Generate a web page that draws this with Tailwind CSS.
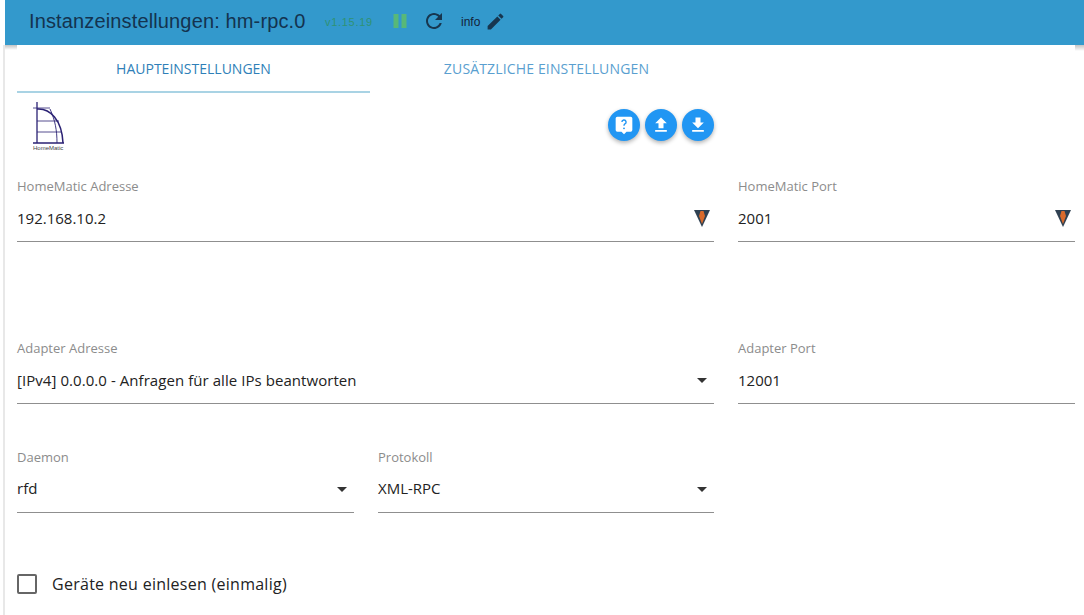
<!DOCTYPE html>
<html lang="de">
<head>
<meta charset="utf-8">
<script src="https://cdn.jsdelivr.net/npm/@tailwindcss/browser@4"></script>
<title>Instanzeinstellungen</title>
</head>
<body class="bg-white overflow-hidden font-['Open_Sans',sans-serif]">
<div class="w-[1084px] h-[615px] relative overflow-hidden pl-[5px]">
  <div class="absolute left-[3px] top-[45px] bottom-0 w-[2px] bg-[#e8e8e8]"></div>
  <div class="absolute left-[5px] top-[45px] w-[12px] h-[5px] bg-gradient-to-b from-[#c4c4c4] to-white"></div>
  <div class="absolute right-0 top-[45px] w-[9px] h-[6px] bg-gradient-to-b from-[#c4c4c4] to-white"></div>

  <header class="h-[45px] bg-[#3399cc] flex items-center pl-[24px] pb-[3px] font-['Liberation_Sans',sans-serif]">
    <h1 class="text-[20px] text-[#14334f] leading-none w-[276px] whitespace-nowrap tracking-[0.14px]">Instanzeinstellungen: hm-rpc.0</h1>
    <span class="ml-[20px] mt-[2px] text-[11px] text-[#2f9274] w-[48px] tracking-[0.7px] whitespace-nowrap">v1.15.19</span>
    <svg class="ml-[19px]" width="16" height="16" viewBox="0 0 16 16"><rect x="1.5" y="1" width="5" height="14" fill="#58b878"/><rect x="9.5" y="1" width="5" height="14" fill="#58b878"/></svg>
    <svg class="ml-[14px]" width="24" height="24" viewBox="0 0 24 24"><path fill="#17364f" d="M17.65 6.35C16.2 4.9 14.21 4 12 4c-4.42 0-7.99 3.58-7.99 8s3.57 8 7.99 8c3.73 0 6.84-2.55 7.73-6h-2.08c-.82 2.33-3.04 4-5.65 4-3.31 0-6-2.69-6-6s2.69-6 6-6c1.66 0 3.14.69 4.22 1.78L13 11h7V4l-2.35 2.35z"/></svg>
    <span class="ml-[15px] mt-[2px] text-[12px] text-[#14233a]">info</span>
    <svg class="ml-[5px] mt-[1px]" width="21" height="21" viewBox="0 0 24 24"><path fill="#17364f" d="M3 17.25V21h3.75L17.81 9.94l-3.75-3.75L3 17.25zM20.71 7.04a1 1 0 0 0 0-1.41l-2.34-2.34a1 1 0 0 0-1.41 0l-1.83 1.83 3.75 3.75 1.83-1.83z"/></svg>
  </header>

  <main class="pl-[12px] pr-[9px]">
    <nav class="flex h-[48px] w-[706px] text-[14px]">
      <div class="w-[353px] flex items-center justify-center border-b-2 border-[#a9d3e4] text-[#2f7fb8]">HAUPTEINSTELLUNGEN</div>
      <div class="w-[353px] flex items-center justify-center pb-[2px] tracking-[0.15px] text-[#5a9fd0]">ZUSÄTZLICHE EINSTELLUNGEN</div>
    </nav>

    <div class="flex justify-between w-[697px] h-[86px]">
      <svg class="ml-[13px] mt-[7px]" width="36" height="52" viewBox="0 0 36 52">
        <g fill="none" stroke="#2b2274">
          <path d="M7 2V43M3 43H34" stroke-width="1.3"/>
          <path d="M3 8H20M7 21H29M7 32H32" stroke-width="0.8"/>
          <path d="M7 9C20 8 32 20 33 43" stroke-width="1.5"/>
          <path d="M20 9C25 20 27 30 27 43" stroke-width="0.9"/>
        </g>
        <text x="3" y="50" font-size="6" fill="#444" font-family="Liberation Sans">HomeMatic</text>
      </svg>
      <div class="flex gap-[5px] mt-[16px] h-[32px]">
        <div class="size-[32px] rounded-full bg-[#2196f3] flex items-center justify-center shadow-[0_2px_4px_rgba(0,0,0,0.3)]">
          <svg width="20" height="20" viewBox="0 0 24 24"><path fill="#fff" d="M20 2H4a2 2 0 0 0-2 2v14a2 2 0 0 0 2 2h5l3 3 3-3h5a2 2 0 0 0 2-2V4a2 2 0 0 0-2-2z"/><path fill="none" stroke="#2196f3" stroke-width="1.7" d="M9.5 8.5a2.5 2.5 0 1 1 3.6 2.2c-.8.5-1.1 1-1.1 2.3"/><circle cx="12" cy="16" r="1.1" fill="#2196f3"/></svg>
        </div>
        <div class="size-[32px] rounded-full bg-[#2196f3] flex items-center justify-center shadow-[0_2px_4px_rgba(0,0,0,0.3)]">
          <svg width="20" height="20" viewBox="0 0 24 24"><path fill="#fff" d="M9 16h6v-6h4l-7-7-7 7h4v6zm-4 2h14v2H5v-2z"/></svg>
        </div>
        <div class="size-[32px] rounded-full bg-[#2196f3] flex items-center justify-center shadow-[0_2px_4px_rgba(0,0,0,0.3)]">
          <svg width="20" height="20" viewBox="0 0 24 24"><path fill="#fff" d="M19 9h-4V3H9v6H5l7 7 7-7zM5 18v2h14v-2H5z"/></svg>
        </div>
      </div>
    </div>

    <div class="grid grid-cols-[697px_337px] gap-x-[24px] h-[99px] text-[15px] text-[#222]">
      <div class="h-[63px] border-b border-[#8f8f8f] relative">
        <label class="block text-[13px] leading-[14px] text-[#8c8c8c]">HomeMatic Adresse</label>
        <div class="mt-[14px] leading-[22px]">192.168.10.2</div>
        <svg class="absolute right-[4px] top-[31px]" width="16" height="17" viewBox="0 0 16 17"><path fill="#2f4152" d="M0 0h16L8 17z"/><path fill="#d96a2b" d="M6.5 1h3L11 6l-3 8-3-8z"/></svg>
      </div>
      <div class="h-[63px] border-b border-[#8f8f8f] relative">
        <label class="block text-[13px] leading-[14px] text-[#8c8c8c]">HomeMatic Port</label>
        <div class="mt-[14px] leading-[22px]">2001</div>
        <svg class="absolute right-[4px] top-[31px]" width="16" height="17" viewBox="0 0 16 17"><path fill="#2f4152" d="M0 0h16L8 17z"/><path fill="#d96a2b" d="M6.5 1h3L11 6l-3 8-3-8z"/></svg>
      </div>
    </div>

    <div class="grid grid-cols-[697px_337px] gap-x-[24px] mt-[63px] h-[63px] text-[15px] text-[#222]">
      <div class="border-b border-[#8f8f8f] relative">
        <label class="block text-[13px] leading-[14px] text-[#8c8c8c]">Adapter Adresse</label>
        <div class="mt-[14px] leading-[22px] tracking-[0.06px]">[IPv4] 0.0.0.0 - Anfragen für alle IPs beantworten</div>
        <svg class="absolute right-[7px] top-[37px]" width="10" height="5" viewBox="0 0 10 5"><path fill="#333" d="M0 0h10L5 5z"/></svg>
      </div>
      <div class="border-b border-[#8f8f8f]">
        <label class="block text-[13px] leading-[14px] text-[#8c8c8c]">Adapter Port</label>
        <div class="mt-[14px] leading-[22px]">12001</div>
      </div>
    </div>

    <div class="grid grid-cols-[337px_336px] gap-x-[24px] mt-[46px] h-[63px] text-[15px] text-[#222]">
      <div class="border-b border-[#8f8f8f] relative">
        <label class="block text-[13px] leading-[14px] text-[#8c8c8c]">Daemon</label>
        <div class="mt-[13px] leading-[22px]">rfd</div>
        <svg class="absolute right-[7px] top-[37px]" width="10" height="5" viewBox="0 0 10 5"><path fill="#333" d="M0 0h10L5 5z"/></svg>
      </div>
      <div class="border-b border-[#8f8f8f] relative">
        <label class="block text-[13px] leading-[14px] text-[#8c8c8c]">Protokoll</label>
        <div class="mt-[13px] leading-[22px]">XML-RPC</div>
        <svg class="absolute right-[7px] top-[37px]" width="10" height="5" viewBox="0 0 10 5"><path fill="#333" d="M0 0h10L5 5z"/></svg>
      </div>
    </div>

    <div class="flex items-center mt-[60px] text-[16px] text-[#222]">
      <div class="size-[20px] border-2 border-[#666] rounded-[2px]"></div>
      <span class="ml-[15px] tracking-[0.27px] leading-[22px]">Geräte neu einlesen (einmalig)</span>
    </div>
  </main>
</div>
</body>
</html>
